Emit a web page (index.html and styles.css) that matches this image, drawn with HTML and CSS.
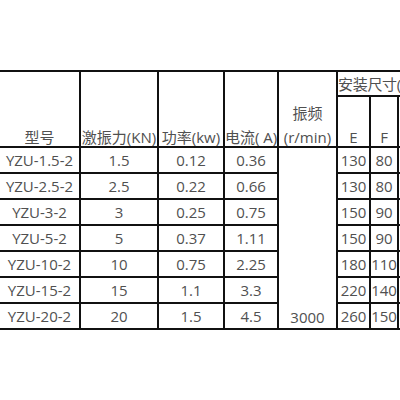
FILE: index.html
```html
<!DOCTYPE html>
<html lang="zh-CN">
<head>
<meta charset="utf-8">
<title>YZU 振动电机参数</title>
<link rel="stylesheet" href="styles.css">
</head>
<body>
<div class="page">
<table class="spec">
  <colgroup>
    <col class="c-model">
    <col class="c-force">
    <col class="c-power">
    <col class="c-current">
    <col class="c-freq">
    <col class="c-e">
    <col class="c-f">
    <col class="c-g">
  </colgroup>
  <thead>
    <tr class="h1">
      <th rowspan="2" class="hb">型号</th>
      <th rowspan="2" class="hb">激振力(KN)</th>
      <th rowspan="2" class="hb">功率(kw)</th>
      <th rowspan="2" class="hb">电流( A)</th>
      <th rowspan="2" class="hb"><div class="freq-top">振频</div>(r/min)</th>
      <th colspan="3" class="group">安装尺寸(</th>
    </tr>
    <tr class="h2">
      <th class="hb">E</th>
      <th class="hb">F</th>
      <th class="hb"></th>
    </tr>
  </thead>
  <tbody>
    <tr><td>YZU-1.5-2</td><td>1.5</td><td>0.12</td><td>0.36</td><td rowspan="7" class="merged">3000</td><td>130</td><td>80</td><td></td></tr>
    <tr><td>YZU-2.5-2</td><td>2.5</td><td>0.22</td><td>0.66</td><td>130</td><td>80</td><td></td></tr>
    <tr><td>YZU-3-2</td><td>3</td><td>0.25</td><td>0.75</td><td>150</td><td>90</td><td></td></tr>
    <tr><td>YZU-5-2</td><td>5</td><td>0.37</td><td>1.11</td><td>150</td><td>90</td><td></td></tr>
    <tr><td>YZU-10-2</td><td>10</td><td>0.75</td><td>2.25</td><td>180</td><td>110</td><td></td></tr>
    <tr><td>YZU-15-2</td><td>15</td><td>1.1</td><td>3.3</td><td>220</td><td>140</td><td></td></tr>
    <tr><td>YZU-20-2</td><td>20</td><td>1.5</td><td>4.5</td><td>260</td><td>150</td><td></td></tr>
  </tbody>
</table>
</div>
</body>
</html>
```
FILE: styles.css
```css
html, body {
  margin: 0;
  padding: 0;
  background: #fff;
}
body {
  width: 400px;
  overflow: hidden;
}
.page {
  padding-top: 70px;
  margin-left: -2px;
}
.spec {
  border-collapse: collapse;
  table-layout: fixed;
  width: 406px;
  font-family: "Open Sans", "Noto Sans CJK SC", sans-serif;
  font-size: 15px;
  color: #505050;
}
.c-model { width: 81px; }
.c-force { width: 78px; }
.c-power { width: 66px; }
.c-current { width: 54px; }
.c-freq { width: 59px; }
.c-e { width: 33px; }
.c-f { width: 28px; }
.c-g { width: 7px; }
.spec th, .spec td {
  border: 2px solid #111;
  padding: 0;
  font-weight: normal;
  text-align: center;
  white-space: nowrap;
  overflow: hidden;
  line-height: 22px;
}
.spec td {
  vertical-align: middle;
}
.spec tbody tr { height: 26px; }
.h1 { height: 25px; }
.h2 { height: 51px; }
.spec .hb {
  vertical-align: bottom;
  padding-bottom: 0;
  line-height: 18px;
}
.freq-top {
  margin-bottom: 6px;
}
.spec .group {
  text-align: left;
  padding-left: 0;
  vertical-align: middle;
  letter-spacing: -0.3px;
}
.spec .merged {
  vertical-align: bottom;
  padding-bottom: 0;
}
```
